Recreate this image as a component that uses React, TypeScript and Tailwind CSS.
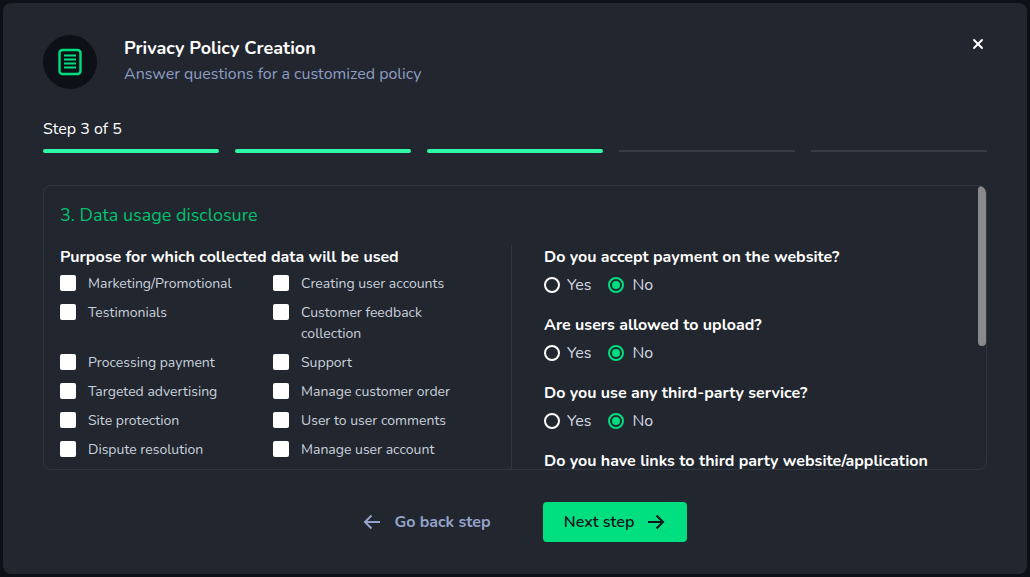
import { X } from "lucide-react";

const font = "font-['Nunito','Open_Sans','Noto_Sans',sans-serif]";

const purposes: [string, string][] = [
  ["Marketing/Promotional", "Creating user accounts"],
  ["Testimonials", "Customer feedback collection"],
  ["Processing payment", "Support"],
  ["Targeted advertising", "Manage customer order"],
  ["Site protection", "User to user comments"],
  ["Dispute resolution", "Manage user account"],
];

const questions = [
  "Do you accept payment on the website?",
  "Are users allowed to upload?",
  "Do you use any third-party service?",
];

function Check({ label }: { label: string }) {
  return (
    <label className="flex items-start">
      <span className="mt-[2px] h-4 w-4 shrink-0 rounded-[2px] bg-white" />
      <span className="ml-3 w-[172px] text-[14px] leading-[21px] text-[#c9d1dd]">{label}</span>
    </label>
  );
}

function Radio({ label, checked }: { label: string; checked?: boolean }) {
  return (
    <label className="flex items-center">
      {checked ? (
        <span className="flex h-4 w-4 items-center justify-center rounded-full border-2 border-[#00df80]">
          <span className="h-2 w-2 rounded-full bg-[#00df80]" />
        </span>
      ) : (
        <span className="h-4 w-4 rounded-full border-2 border-white" />
      )}
      <span className={checked ? "ml-2 text-[16px] leading-6 text-[#d5dbe5]" : "ml-[7px] text-[16px] leading-6 text-[#d5dbe5]"}>{label}</span>
    </label>
  );
}

function Arrow({ flip }: { flip?: boolean }) {
  return (
    <svg width="18" height="16" viewBox="0 0 18 16" fill="none" stroke="currentColor" strokeWidth="2" className={flip ? "rotate-180" : ""}>
      <path d="M1 8h15M9.5 1.5 16 8l-6.5 6.5" />
    </svg>
  );
}

export default function App() {
  return (
    <div className={`h-[577px] w-[1030px] overflow-hidden bg-[#0d1117] p-[3px] ${font}`}>
      <div className="flex h-[571px] w-[1024px] flex-col rounded-lg bg-[#22262e] px-10 pt-8">
        {/* Header */}
        <div className="flex h-[54px] items-center">
          <div className="flex h-[54px] w-[54px] items-center justify-center rounded-full bg-[#0d1117]">
            <svg width="26" height="28" viewBox="0 0 26 28" fill="none" stroke="#00df80">
              <rect x="2.5" y="2" width="21" height="24" rx="3" strokeWidth="2.4" />
              <path d="M7 7.5h12M7 11.5h12M7 15.5h12M7 19.5h12" strokeWidth="1.8" />
            </svg>
          </div>
          <div className="mt-[-3px] ml-[27px]">
            <h2 className="text-[18px] leading-[24px] font-bold text-white">Privacy Policy Creation</h2>
            <p className="mt-[2px] text-[16px] leading-[24px] text-[#8e9dc4]">Answer questions for a customized policy</p>
          </div>
          <X className="mt-[-36px] ml-auto mr-[1px] h-4 w-4 text-white" strokeWidth={2.8} />
        </div>

        {/* Steps */}
        <p className="mt-[28px] text-[16px] leading-6 text-white">Step 3 of 5</p>
        <div className="mt-[8px] flex h-1 items-center gap-4">
          {[0, 1, 2, 3, 4].map((i) =>
            i < 3 ? (
              <div key={i} className="h-1 flex-1 rounded-full bg-[#2ffca6]" />
            ) : (
              <div key={i} className="h-[2px] flex-1 bg-[#363b45]" />
            ),
          )}
        </div>

        {/* Form box */}
        <div className="relative mt-8 h-[285px] overflow-hidden rounded-lg border border-[#31353e]">
          <div className="px-4 pt-[15px]">
            <h3 className="text-[18px] leading-7 text-[#00c26f]">3. Data usage disclosure</h3>
            <div className="mt-[16px] flex">
              <div className="w-[452px] shrink-0 border-r border-[#31353e]">
                <p className="text-[16px] leading-6 font-bold text-white">Purpose for which collected data will be used</p>
                <div className="mt-1 flex flex-col gap-2">
                  {purposes.map(([a, b]) => (
                    <div key={a} className="flex">
                      <div className="w-[213px]">
                        <Check label={a} />
                      </div>
                      <Check label={b} />
                    </div>
                  ))}
                </div>
              </div>
              <div className="pl-8">
                {questions.map((q) => (
                  <div key={q} className="mb-[16px]">
                    <p className="text-[16px] leading-6 font-bold text-white">{q}</p>
                    <div className="mt-[4px] flex gap-[17px]">
                      <Radio label="Yes" />
                      <Radio label="No" checked />
                    </div>
                  </div>
                ))}
                <p className="text-[16px] leading-6 font-bold whitespace-nowrap text-white">Do you have links to third party website/application</p>
              </div>
            </div>
          </div>
          <div className="absolute top-0 right-0 h-[160px] w-2 rounded-full bg-[#8a8a8a]" />
        </div>

        {/* Footer */}
        <div className="mt-[32px] flex items-center justify-center pl-5">
          <button className="flex items-center gap-[13px] text-[16px] font-bold text-[#94a3c9]">
            <Arrow flip />
            Go back step
          </button>
          <button className="ml-[52px] flex h-10 w-[144px] items-center justify-center gap-[13px] rounded bg-[#00df80] text-[16px] font-semibold text-[#11151c]">
            Next step
            <Arrow />
          </button>
        </div>
      </div>
    </div>
  );
}
